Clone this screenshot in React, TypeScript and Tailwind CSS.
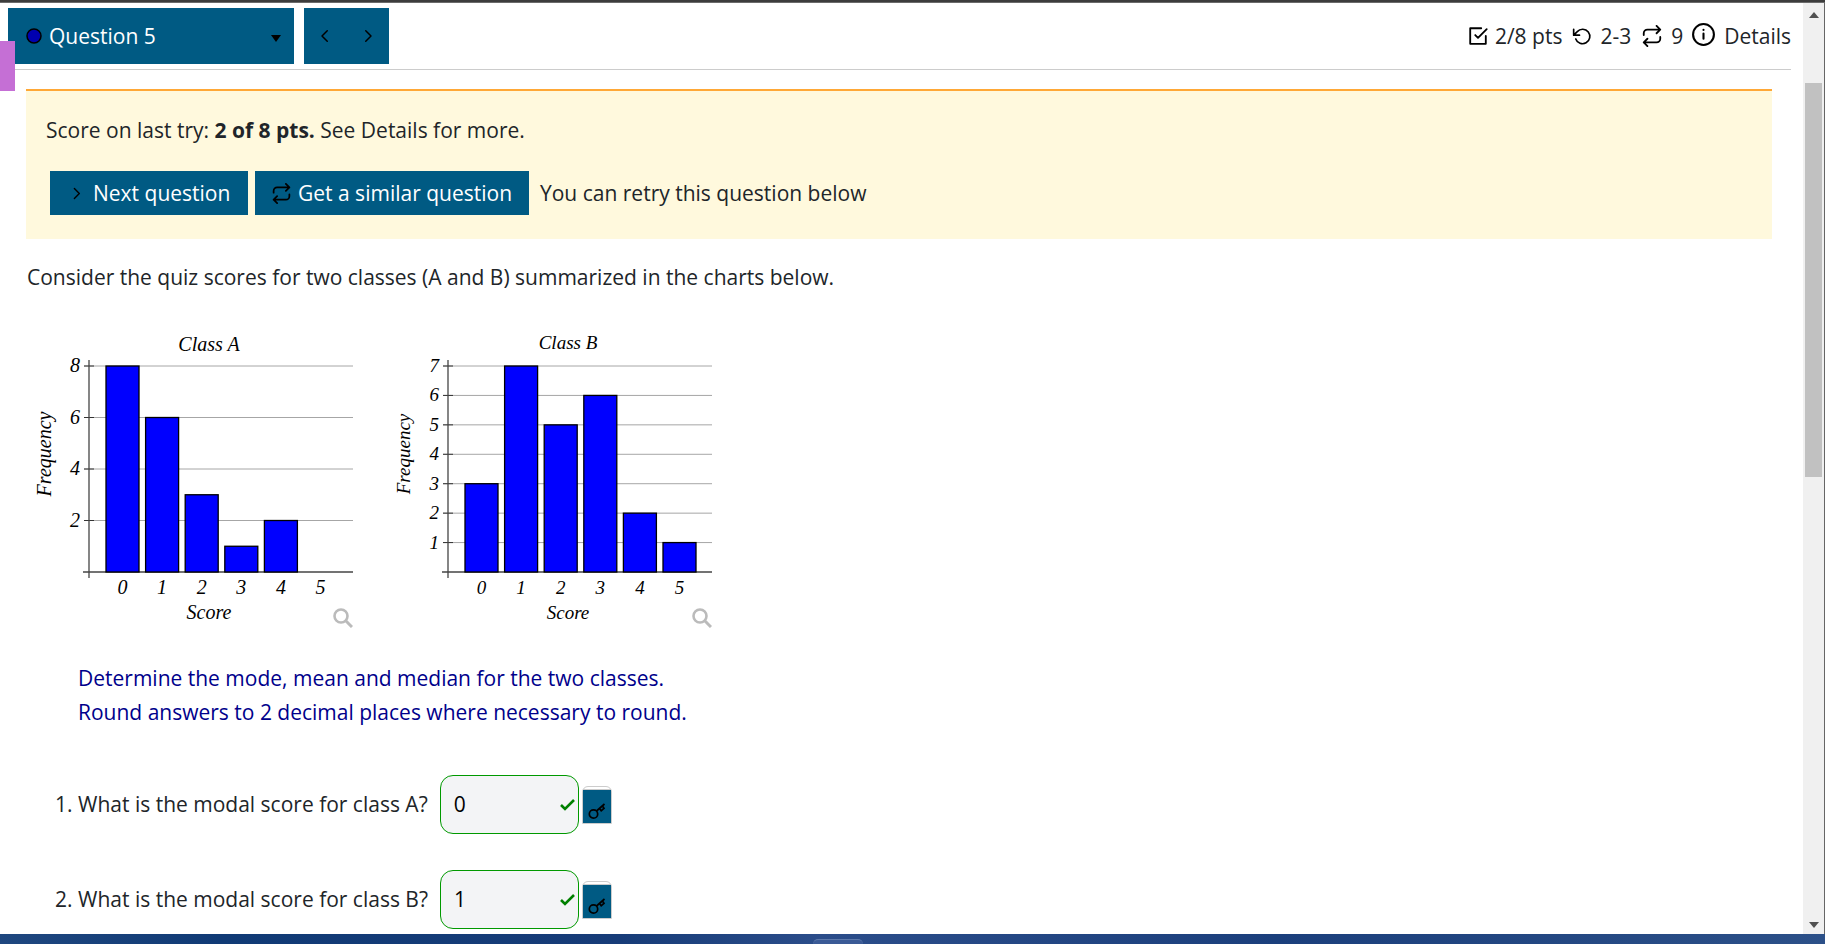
import React, { useState } from 'react';

interface ChartProps {
  title: string;
  titleY: number;
  labelClass: string;
  data: number[];
  ticks: number[];
  max: number;
}

interface Question {
  id: string;
  text: string;
  answer: string;
}

const scoresA = [8, 6, 3, 1, 2, 0];
const scoresB = [3, 7, 5, 6, 2, 1];

const questions: Question[] = [
  { id: 'mode-a', text: 'What is the modal score for class A?', answer: '0' },
  { id: 'mode-b', text: 'What is the modal score for class B?', answer: '1' },
];

const stroke = {
  fill: 'none',
  stroke: 'currentColor',
  strokeWidth: 2,
  strokeLinecap: 'round' as const,
  strokeLinejoin: 'round' as const,
  viewBox: '0 0 24 24',
  'aria-hidden': true,
};

const RepeatIcon = ({ className }: { className: string }) => (
  <svg {...stroke} className={className}>
    <path d="M17 1l4 4-4 4M3 11V9a4 4 0 0 1 4-4h14M7 23l-4-4 4-4M21 13v2a4 4 0 0 1-4 4H3" />
  </svg>
);

const ChevronIcon = ({ left, className }: { left?: boolean; className: string }) => (
  <svg {...stroke} className={className}>
    <path d={left ? 'M15 5l-7 7 7 7' : 'M9 5l7 7-7 7'} />
  </svg>
);

const KeyIcon = () => (
  <svg viewBox="0 0 18 18" className="size-[18px]" fill="none" stroke="black" strokeWidth="1.7" aria-hidden="true">
    <circle cx="5.5" cy="12" r="4.2" />
    <path d="M8.500 9l8-7M11.500 6.500l1.700 2.200 2.800-2.400-1.500-2.300" strokeWidth="1.7" />
  </svg>
);

const BarChart: React.FC<ChartProps> = ({ title, titleY, labelClass, data, ticks, max }) => {
  const base = 249;
  const unit = 206 / max;

  return (
    <div className="relative">
      <svg viewBox="0 0 350 310" className="block h-[310px] w-[350px] font-['Liberation_Serif',serif] italic" role="img" aria-label={title}>
        <text x="182" y={titleY} textAnchor="middle" className={labelClass}>{title}</text>
        {ticks.map((t) => (
          <g key={t}>
            <line x1="57" x2="326" y1={base - t * unit} y2={base - t * unit} stroke="#a6a6a6" />
            <line x1="57" x2="67" y1={base - t * unit} y2={base - t * unit} stroke="#333" />
            <text x="53" y={base - t * unit + 6} textAnchor="end" className={labelClass}>{t}</text>
          </g>
        ))}
        <line x1="56" x2="326" y1={base} y2={base} stroke="#444" strokeWidth="1.3" />
        <line x1="62" x2="62" y1="37" y2="255" stroke="#444" strokeWidth="1.3" />
        {data.map((value, i) => (
          <g key={i}>
            {value > 0 && (
              <rect x={79 + i * 39.6} y={base - value * unit} width="33" height={value * unit} fill="#00f" stroke="black" strokeWidth="1.3" />
            )}
            <text x={95.5 + i * 39.6} y="271" textAnchor="middle" className={labelClass}>{i}</text>
          </g>
        ))}
        <text x="182" y="296" textAnchor="middle" className={labelClass}>Score</text>
        <text transform="translate(24 131) rotate(-90)" textAnchor="middle" className={labelClass}>Frequency</text>
      </svg>
      <button type="button" aria-label={`Enlarge ${title} chart`} className="absolute right-6 bottom-[5px] text-[#bbb]">
        <svg viewBox="0 0 20 20" className="size-5" fill="none" stroke="currentColor" aria-hidden="true">
          <circle cx="8" cy="8" r="6.5" strokeWidth="2.6" />
          <path d="M12.5 12.5l6.5 6.5" strokeWidth="3" />
        </svg>
      </button>
    </div>
  );
};

const AnswerRow: React.FC<{ question: Question }> = ({ question }) => {
  const [value, setValue] = useState<string>(question.answer);

  return (
    <li>
      <div className="flex items-center">
        <label htmlFor={question.id} className="pb-0.5">{question.text}</label>
        <div className="relative ml-3">
          <input
            id={question.id}
            type="text"
            value={value}
            onChange={(e) => setValue(e.target.value)}
            className="block h-[59px] w-[139px] rounded-[13px] border border-[#090] bg-[#f3f4f6] pr-6 pb-0.5 pl-[13px] text-black outline-none"
          />
          <svg viewBox="0 0 15 12" className="absolute top-6 right-1 h-3 w-[15px]" fill="none" stroke="#008000" strokeWidth="2.6" aria-hidden="true">
            <path d="M1 6l4 4 9-9" />
          </svg>
        </div>
        <button type="button" aria-label="Show answer" className="ml-[3px] flex h-[38px] w-[30px] flex-col rounded-t-md border border-[#ccc] bg-white pt-0.5">
          <span className="flex w-full flex-1 items-end justify-center border-t border-[#ccc] bg-[#005a83] pb-[3px]">
            <KeyIcon />
          </span>
        </button>
      </div>
    </li>
  );
};

const App: React.FC = () => {
  return (
    <div className="flex min-h-screen flex-col bg-white font-['Open_Sans','Noto_Sans',sans-serif] text-[21px] leading-[34px] text-[#212529]">
      <div className="h-[3px] border-b border-[#6b6b6b] bg-[#3c3c3c]" />

      <div className="flex flex-1 border-r border-[#666]">
        <main className="relative min-w-0 flex-1">
          <header className="mr-3 ml-2 flex items-center justify-between border-b border-[#ccc] pt-[5px] pb-[5px]">
            <div className="flex gap-2.5">
              <button type="button" className="flex h-14 w-[286px] items-center bg-[#005a83] pr-[13px] pl-[18px] text-white">
                <svg viewBox="0 0 16 16" className="size-4" aria-hidden="true">
                  <circle cx="8" cy="8" r="7" fill="#0000b0" stroke="black" strokeWidth="1.5" />
                </svg>
                <span className="ml-[7px]">Question 5</span>
                <svg viewBox="0 0 10 7" className="mt-1 ml-auto h-[7px] w-2.5" aria-hidden="true">
                  <path d="M0 0h10L5 7z" />
                </svg>
              </button>
              <div className="flex h-14 w-[85px] bg-[#005a83] text-black">
                <button type="button" aria-label="Previous question" className="flex flex-1 items-center justify-center">
                  <ChevronIcon left className="size-[18px]" />
                </button>
                <button type="button" aria-label="Next question" className="flex flex-1 items-center justify-center">
                  <ChevronIcon className="size-[18px]" />
                </button>
              </div>
            </div>

            <div className="flex items-center text-[#212529]">
              <svg {...stroke} className="mr-1.5 size-[22px] text-black">
                <path d="M9 11l3 3 9.500-9.500M20.500 12v8.500h-17v-17h12" />
              </svg>
              <span>2/8 pts</span>
              <svg {...stroke} className="mr-2 ml-2.5 size-5 text-black">
                <path d="M2 4v7h7M4.500 15.500a8.700 8.700 0 1 0 1.800-8.800L2 11" />
              </svg>
              <span>2-3</span>
              <RepeatIcon className="mr-2 ml-2.5 size-[22px] text-black" />
              <span>9</span>
              <button type="button" className="ml-2 flex items-center">
                <svg {...stroke} className="mr-2 mb-1 size-[25px] text-black">
                  <circle cx="12" cy="12" r="10" />
                  <path d="M12 11v5M12 7.500v.2" />
                </svg>
                Details
              </button>
            </div>
          </header>

          <div className="absolute top-[38px] left-0 h-[50px] w-[15px] bg-[#c56fd5]" />

          <section className="mt-[19px] mr-[31px] ml-[26px] border-t-2 border-[#ffa836] bg-[#fff9dd] px-5 pt-[22px] pb-6">
            <p>
              Score on last try: <strong>2 of 8 pts.</strong> See Details for more.
            </p>
            <div className="mt-6 ml-1 flex items-center">
              <button type="button" className="flex h-11 w-[198px] items-center bg-[#005a83] pl-[18px] text-white">
                <ChevronIcon className="mr-2 size-[17px] text-black" />
                Next question
              </button>
              <button type="button" className="ml-[7px] flex h-11 w-[274px] items-center bg-[#005a83] pl-4 text-white">
                <RepeatIcon className="mr-1.5 size-[21px] text-black" />
                Get a similar question
              </button>
              <span className="ml-[11px]">You can retry this question below</span>
            </div>
          </section>

          <p className="mt-[21px] ml-[27px]">Consider the quiz scores for two classes (A and B) summarized in the charts below.</p>

          <div className="mt-[29px] ml-[27px] flex gap-[9px]">
            <BarChart title="Class A" titleY={28} labelClass="text-[20px]" data={scoresA} ticks={[2, 4, 6, 8]} max={8} />
            <BarChart title="Class B" titleY={26} labelClass="text-[19px]" data={scoresB} ticks={[1, 2, 3, 4, 5, 6, 7]} max={7} />
          </div>

          <p className="mt-7 ml-[78px] text-[#00008b]">
            Determine the mode, mean and median for the two classes.
            <br />
            Round answers to 2 decimal places where necessary to round.
          </p>

          <ol className="mt-[46px] mb-1 ml-[78px] list-decimal space-y-9">
            {questions.map((q) => (
              <AnswerRow key={q.id} question={q} />
            ))}
          </ol>
        </main>

        <div className="flex w-[21px] flex-col items-center bg-[#f0f0f0]" aria-hidden="true">
          <div className="flex h-20 items-start pt-[9px]">
            <svg viewBox="0 0 10 6" className="h-1.5 w-2.5"><path d="M0 6h10L5 0z" fill="#505050" /></svg>
          </div>
          <div className="h-[394px] w-[17px] bg-[#c1c1c1]" />
          <svg viewBox="0 0 10 6" className="mt-auto mb-1.5 h-1.5 w-2.5"><path d="M0 0h10L5 6z" fill="#505050" /></svg>
        </div>
      </div>

      <footer className="flex h-2.5 items-end justify-center bg-[linear-gradient(to_right,#1f477f,#103a75_12%,#173c78_34%,#2b4d8a_45%,#1b3f7c_70%,#2c5088)]">
        <div className="mr-[150px] h-[5px] w-[50px] rounded-t-md border-t border-[#5d79ab] bg-[#3a5a96]" />
      </footer>
    </div>
  );
};

export default App;
